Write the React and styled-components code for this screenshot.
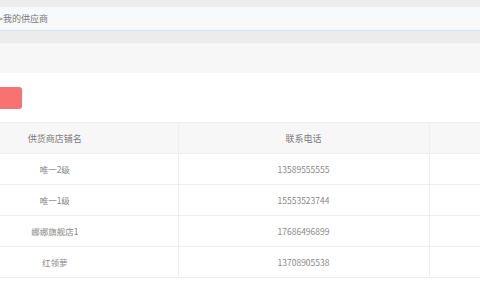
import React from "react";
import styled, { createGlobalStyle } from "styled-components";

const GlobalStyle = createGlobalStyle`
  html, body {
    margin: 0;
    padding: 0;
    background: #ececec;
    overflow: hidden;
  }
  body {
    font-family: "Noto Sans CJK SC", "Noto Sans", sans-serif;
    color: #666;
  }
`;

const Page = styled.div`
  width: 480px;
  height: 300px;
  overflow: hidden;
  background: #ececec;
  padding-top: 7px;
  box-sizing: border-box;
`;

const Shift = styled.div`
  margin-left: -68px;
  width: 820px;
`;

const Breadcrumb = styled.div`
  height: 23px;
  line-height: 23px;
  background: #f7f9fb;
  border-bottom: 1px solid #d8e3ec;
  padding-left: 46px;
  font-size: 9px;
  color: #777;
`;

const Crumb = styled.span`
  color: ${({ muted }) => (muted ? "#999" : "#777")};
`;

const Toolbar = styled.div`
  margin-top: 12px;
  height: 30px;
  background: #f7f7f7;
`;

const Content = styled.div`
  background: #fff;
  padding-top: 14px;
  height: 240px;
`;

const AddButton = styled.button`
  display: block;
  margin-left: 26px;
  width: 64px;
  height: 22px;
  border: none;
  border-radius: 3px;
  background: #f87272;
  color: #fff;
  font-family: inherit;
  font-size: 9px;
  padding: 0;
`;

const Table = styled.table`
  margin-top: 13px;
  border-collapse: collapse;
  table-layout: fixed;
  width: 820px;
`;

const Th = styled.th`
  height: 30px;
  background: #f7f7f7;
  border-top: 1px solid #eee;
  border-bottom: 1px solid #eee;
  border-right: 1px solid #eee;
  font-weight: normal;
  font-size: 9px;
  color: #7a7a7a;
  text-align: center;
  padding: 0;
`;

const Td = styled.td`
  height: 30px;
  border-bottom: 1px solid #eee;
  border-right: 1px solid #eee;
  font-size: 8.5px;
  color: #888;
  text-align: center;
  padding: 0;
`;

const rows = [
  { name: "唯一2级", phone: "13589555555" },
  { name: "唯一1级", phone: "15553523744" },
  { name: "娜娜旗舰店1", phone: "17686496899" },
  { name: "红领萝", phone: "13708905538" },
];

export default function App() {
  return (
    <Page>
      <GlobalStyle />
      <Shift>
        <Breadcrumb>
          <Crumb muted>首页 </Crumb>
          <Crumb>&gt;我的供应商</Crumb>
        </Breadcrumb>
        <Toolbar />
        <Content>
          <AddButton>新增</AddButton>
          <Table>
            <colgroup>
              <col style={{ width: 246 }} />
              <col style={{ width: 251 }} />
              <col style={{ width: 323 }} />
            </colgroup>
            <thead>
              <tr>
                <Th>供货商店铺名</Th>
                <Th>联系电话</Th>
                <Th>操作</Th>
              </tr>
            </thead>
            <tbody>
              {rows.map((r) => (
                <tr key={r.phone}>
                  <Td>{r.name}</Td>
                  <Td>{r.phone}</Td>
                  <Td />
                </tr>
              ))}
            </tbody>
          </Table>
        </Content>
      </Shift>
    </Page>
  );
}
